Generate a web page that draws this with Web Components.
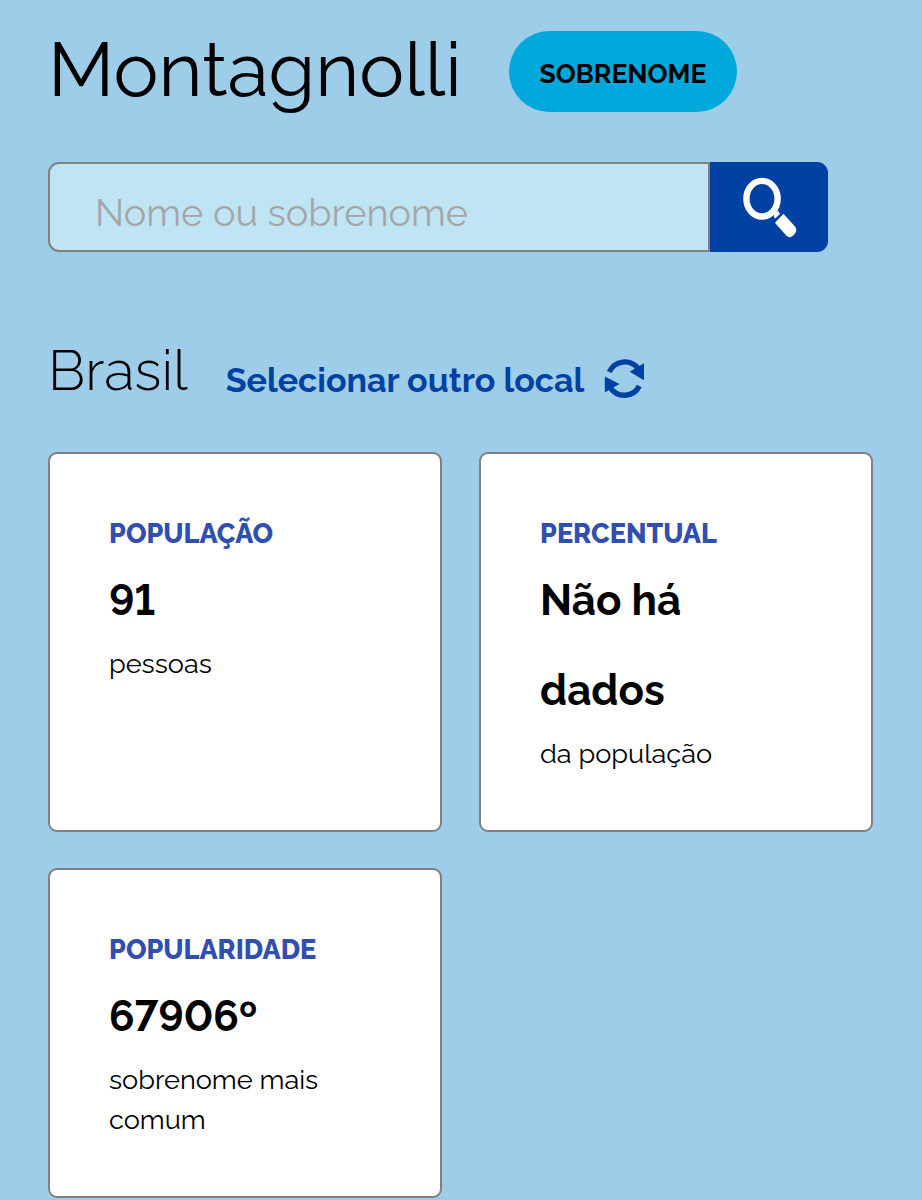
<!DOCTYPE html>
<html lang="pt-BR">
<head>
<meta charset="utf-8">
<title>Montagnolli</title>
<style>
    html, body {
        margin: 0;
        background: #9ecde9;
    }
    body {
        height: 1200px;
        overflow: hidden;
        color: #000;
        font-family: Raleway, Lato, sans-serif;
        font-variant-numeric: lining-nums;
    }
</style>
</head>
<body>
<name-page>
    <name-header slot="header">
        Montagnolli
        <name-tag slot="tag">SOBRENOME</name-tag>
    </name-header>
    <name-search slot="search" placeholder="Nome ou sobrenome"></name-search>
    <place-bar slot="place">
        Brasil
        <span slot="action">Selecionar outro local</span>
    </place-bar>
    <stat-card label="POPULAÇÃO" value="91">pessoas</stat-card>
    <stat-card label="PERCENTUAL" value="Não há dados">da população</stat-card>
    <stat-card label="POPULARIDADE" value="67906º">sobrenome mais comum</stat-card>
</name-page>
<script>
(function () {
    function attach(el, html) {
        const template = document.createElement("template");
        template.innerHTML = html;
        const root = el.attachShadow({ mode: "open" });
        root.appendChild(template.content.cloneNode(true));
        return root;
    }

    class NamePage extends HTMLElement {
        constructor() {
            super();
            attach(this, `
            <style>
            :host {
                display: flex;
                flex-direction: column;
                padding: 31px 49px 0 48px;
            }
            .search { margin-top: 50px; }
            .place { margin-top: 86px; }
            .cards {
                display: grid;
                grid-template-columns: 394px 394px;
                grid-template-rows: 380px 330px;
                gap: 36px 37px;
                margin-top: 44px;
            }
            </style>
            <slot name="header"></slot>
            <div class="search"><slot name="search"></slot></div>
            <div class="place"><slot name="place"></slot></div>
            <div class="cards"><slot></slot></div>
            `);
        }
    }

    class NameHeader extends HTMLElement {
        constructor() {
            super();
            attach(this, `
            <style>
            :host {
                display: flex;
                align-items: center;
                height: 81px;
            }
            h1 {
                width: 461px;
                margin: 0;
                padding-bottom: 4px;
                font-size: 75.5px;
                font-weight: 400;
                line-height: 76px;
            }
            </style>
            <h1><slot></slot></h1>
            <slot name="tag"></slot>
            `);
        }
    }

    class NameTag extends HTMLElement {
        constructor() {
            super();
            attach(this, `
            <style>
            :host {
                display: flex;
                align-items: center;
                justify-content: center;
                box-sizing: border-box;
                width: 228px;
                height: 81px;
                padding-top: 5px;
                border-radius: 41px;
                background: #00a8db;
                font-size: 26.5px;
                font-weight: 700;
                line-height: 40px;
            }
            </style>
            <slot></slot>
            `);
        }
    }

    class NameSearch extends HTMLElement {
        constructor() {
            super();
            const root = attach(this, `
            <style>
            :host {
                display: flex;
                width: 780px;
                height: 90px;
            }
            input {
                flex: 1;
                min-width: 0;
                box-sizing: border-box;
                margin: 0;
                padding: 10px 0 0 45px;
                border: 2px solid #808080;
                border-radius: 11px 0 0 11px;
                background: #bfe5f4;
                font: inherit;
                font-size: 37.8px;
                outline: none;
            }
            input::placeholder {
                color: #a5a5a5;
                opacity: 1;
            }
            button {
                width: 118px;
                margin: 0;
                padding: 0;
                border: 0;
                border-radius: 0 11px 11px 0;
                background: #0041a3;
            }
            svg { display: block; }
            </style>
            <input type="text">
            <button type="button">
                <svg width="118" height="90" viewBox="710 162 118 90" fill="#fff">
                    <ellipse cx="762" cy="198.7" rx="15.6" ry="17.8" fill="none" stroke="#fff" stroke-width="6.4"/>
                    <path d="M774 214l4.2-3.5.8 2.2 1.2 1.1-5 4.8-1.3-1.5z"/>
                    <path d="M784 214.4L795 226.4Q797.8 229.8 795 233.4L793 235.7Q789.7 238.6 786.5 235.7L775.5 223.5Q774.9 222.7 775.6 221.9L782.8 214.4Q783.4 213.8 784 214.4z"/>
                </svg>
            </button>
            `);
            root.querySelector("input").placeholder = this.getAttribute("placeholder");
        }
    }

    class PlaceBar extends HTMLElement {
        constructor() {
            super();
            attach(this, `
            <style>
            :host {
                display: flex;
                height: 70px;
            }
            h2 {
                margin: 0;
                font-size: 56.3px;
                font-weight: 300;
                line-height: 64px;
            }
            .action {
                display: flex;
                align-items: center;
                height: 40px;
                margin: 22px 0 0 38px;
                color: #0041a3;
                font-size: 34px;
                font-weight: 700;
                line-height: 40px;
            }
            svg {
                margin: -3px 0 0 20px;
            }
            </style>
            <h2><slot></slot></h2>
            <div class="action">
                <slot name="action"></slot>
                <svg width="42" height="42" viewBox="604 358 42 42" fill="#0041a3">
                    <path d="M609.3 372A16.8 16.8 0 0 1 638 368.5" fill="none" stroke="#0041a3" stroke-width="5.4"/>
                    <path d="M644 363.3V380.2L629.6 371.7z"/>
                    <path d="M610.5 388A16.8 16.8 0 0 0 639.3 386" fill="none" stroke="#0041a3" stroke-width="5.4"/>
                    <path d="M604.8 376.4V392.6L619.5 384z"/>
                </svg>
            </div>
            `);
        }
    }

    class StatCard extends HTMLElement {
        constructor() {
            super();
            const root = attach(this, `
            <style>
            :host {
                display: block;
                box-sizing: border-box;
                padding: 60px 80px 0 59px;
                border: 2px solid #808080;
                border-radius: 9px;
                background: #fff;
            }
            .label {
                color: #304fae;
                font-size: 27.1px;
                font-weight: 800;
                line-height: 40px;
            }
            .value {
                margin: 1px 0 -1px;
                font-size: 42.1px;
                font-weight: 700;
                line-height: 90px;
            }
            .note {
                font-size: 27.1px;
                line-height: 40px;
            }
            </style>
            <div class="label"></div>
            <div class="value"></div>
            <div class="note"><slot></slot></div>
            `);
            root.querySelector(".label").textContent = this.getAttribute("label");
            root.querySelector(".value").textContent = this.getAttribute("value");
        }
    }

    customElements.define("name-page", NamePage);
    customElements.define("name-header", NameHeader);
    customElements.define("name-tag", NameTag);
    customElements.define("name-search", NameSearch);
    customElements.define("place-bar", PlaceBar);
    customElements.define("stat-card", StatCard);
})();
</script>
</body>
</html>
